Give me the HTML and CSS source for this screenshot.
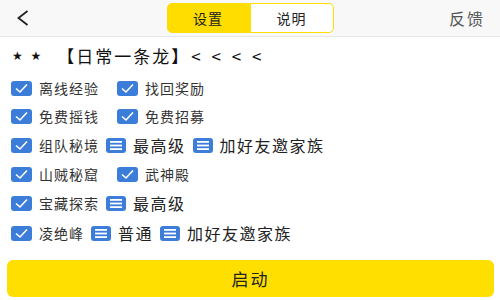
FILE: index.html
```html
<!DOCTYPE html>
<html lang="zh-CN">
<head>
    <meta charset="UTF-8">
    <meta name="viewport" content="width=device-width, initial-scale=1.0">
    <title>日常一条龙</title>
    <link rel="stylesheet" href="styles.css">
</head>
<body>
    <header class="topbar">
        <a class="back" href="#">
            <svg width="13" height="16" viewBox="0 0 13 16"><polyline points="11.5,1 2.5,8 11.5,15" fill="none" stroke="#222" stroke-width="1.8"/></svg>
        </a>
        <div class="tabs">
            <button class="tab active">设置</button>
            <button class="tab">说明</button>
        </div>
        <a class="feedback" href="#">反馈</a>
    </header>

    <div class="title"><span class="stars">★ ★</span>【日常一条龙】<span class="arrows">&lt; &lt; &lt; &lt;</span></div>

    <div class="options">
        <div class="row">
            <label class="check"><span class="box"><svg width="21" height="15" viewBox="0 0 21 15"><polyline points="5,7.5 9,11 16,3.5" fill="none" stroke="#fff" stroke-width="1.6"/></svg></span>离线经验</label>
            <label class="check"><span class="box"><svg width="21" height="15" viewBox="0 0 21 15"><polyline points="5,7.5 9,11 16,3.5" fill="none" stroke="#fff" stroke-width="1.6"/></svg></span>找回奖励</label>
        </div>
        <div class="row">
            <label class="check"><span class="box"><svg width="21" height="15" viewBox="0 0 21 15"><polyline points="5,7.5 9,11 16,3.5" fill="none" stroke="#fff" stroke-width="1.6"/></svg></span>免费摇钱</label>
            <label class="check"><span class="box"><svg width="21" height="15" viewBox="0 0 21 15"><polyline points="5,7.5 9,11 16,3.5" fill="none" stroke="#fff" stroke-width="1.6"/></svg></span>免费招募</label>
        </div>
        <div class="row tall">
            <label class="check"><span class="box"><svg width="21" height="15" viewBox="0 0 21 15"><polyline points="5,7.5 9,11 16,3.5" fill="none" stroke="#fff" stroke-width="1.6"/></svg></span>组队秘境</label>
            <span class="select"><span class="menu"><svg width="20" height="15" viewBox="0 0 20 15"><rect x="4" y="3" width="12" height="1.8" fill="#fff"/><rect x="4" y="6.6" width="12" height="1.8" fill="#fff"/><rect x="4" y="10.2" width="12" height="1.8" fill="#fff"/></svg></span>最高级</span>
            <span class="select"><span class="menu"><svg width="20" height="15" viewBox="0 0 20 15"><rect x="4" y="3" width="12" height="1.8" fill="#fff"/><rect x="4" y="6.6" width="12" height="1.8" fill="#fff"/><rect x="4" y="10.2" width="12" height="1.8" fill="#fff"/></svg></span>加好友邀家族</span>
        </div>
        <div class="row">
            <label class="check"><span class="box"><svg width="21" height="15" viewBox="0 0 21 15"><polyline points="5,7.5 9,11 16,3.5" fill="none" stroke="#fff" stroke-width="1.6"/></svg></span>山贼秘窟</label>
            <label class="check"><span class="box"><svg width="21" height="15" viewBox="0 0 21 15"><polyline points="5,7.5 9,11 16,3.5" fill="none" stroke="#fff" stroke-width="1.6"/></svg></span>武神殿</label>
        </div>
        <div class="row tall">
            <label class="check"><span class="box"><svg width="21" height="15" viewBox="0 0 21 15"><polyline points="5,7.5 9,11 16,3.5" fill="none" stroke="#fff" stroke-width="1.6"/></svg></span>宝藏探索</label>
            <span class="select"><span class="menu"><svg width="20" height="15" viewBox="0 0 20 15"><rect x="4" y="3" width="12" height="1.8" fill="#fff"/><rect x="4" y="6.6" width="12" height="1.8" fill="#fff"/><rect x="4" y="10.2" width="12" height="1.8" fill="#fff"/></svg></span>最高级</span>
        </div>
        <div class="row tall">
            <label class="check"><span class="box"><svg width="21" height="15" viewBox="0 0 21 15"><polyline points="5,7.5 9,11 16,3.5" fill="none" stroke="#fff" stroke-width="1.6"/></svg></span>凌绝峰</label>
            <span class="select"><span class="menu"><svg width="20" height="15" viewBox="0 0 20 15"><rect x="4" y="3" width="12" height="1.8" fill="#fff"/><rect x="4" y="6.6" width="12" height="1.8" fill="#fff"/><rect x="4" y="10.2" width="12" height="1.8" fill="#fff"/></svg></span>普通</span>
            <span class="select"><span class="menu"><svg width="20" height="15" viewBox="0 0 20 15"><rect x="4" y="3" width="12" height="1.8" fill="#fff"/><rect x="4" y="6.6" width="12" height="1.8" fill="#fff"/><rect x="4" y="10.2" width="12" height="1.8" fill="#fff"/></svg></span>加好友邀家族</span>
        </div>
    </div>

    <button class="start">启动</button>
</body>
</html>
```

FILE: styles.css
```css
body {
    margin: 0;
    padding: 0;
    height: 300px;
    overflow: hidden;
    font-family: "Noto Sans CJK SC", "Noto Sans", sans-serif;
    background-color: #fff;
    color: #333;
}
.topbar {
    display: grid;
    grid-template-columns: 1fr auto 1fr;
    align-items: center;
    height: 36px;
    background-color: #f8f8f8;
    border-bottom: 1px solid #e6e6e6;
}
.back {
    display: flex;
    padding-left: 16px;
}
.tabs {
    display: flex;
}
.tab {
    width: 84px;
    height: 30px;
    padding: 0;
    font-family: inherit;
    font-size: 14px;
    letter-spacing: 1px;
    color: #222;
    background-color: #fff;
    border: 1.5px solid #ffdd00;
    border-radius: 0 5px 5px 0;
}
.tab.active {
    width: 83px;
    background-color: #ffdd00;
    border-radius: 5px 0 0 5px;
}
.feedback {
    justify-self: end;
    padding-right: 15px;
    font-size: 16px;
    letter-spacing: 2px;
    color: #555;
    text-decoration: none;
}
.title {
    display: flex;
    align-items: center;
    height: 37px;
    padding-left: 12px;
    font-size: 17px;
    letter-spacing: 2px;
    color: #111;
}
.stars {
    font-family: "DejaVu Sans", sans-serif;
    font-size: 12px;
    letter-spacing: 2px;
    margin-right: 14px;
}
.arrows {
    letter-spacing: 3.5px;
    margin-left: 1px;
}
.options {
    padding-left: 11px;
}
.row {
    display: flex;
    align-items: center;
    gap: 7px;
    height: 28px;
}
.row.tall {
    height: 30px;
}
.check {
    display: flex;
    align-items: center;
    gap: 7px;
    font-size: 14px;
    letter-spacing: 1px;
    color: #333;
}
.check + .check {
    margin-left: 11px;
}
.box, .menu {
    display: flex;
    background-color: #3b7dd8;
    border-radius: 3px;
}
.select {
    display: flex;
    align-items: center;
    gap: 7px;
    font-size: 16px;
    letter-spacing: 1.5px;
    color: #222;
}
.start {
    display: block;
    width: 487px;
    height: 37px;
    margin: 12px 0 0 7px;
    padding: 0;
    font-family: inherit;
    font-size: 17px;
    letter-spacing: 2px;
    color: #222;
    background-color: #ffdf00;
    border: none;
    border-radius: 6px;
}
```
